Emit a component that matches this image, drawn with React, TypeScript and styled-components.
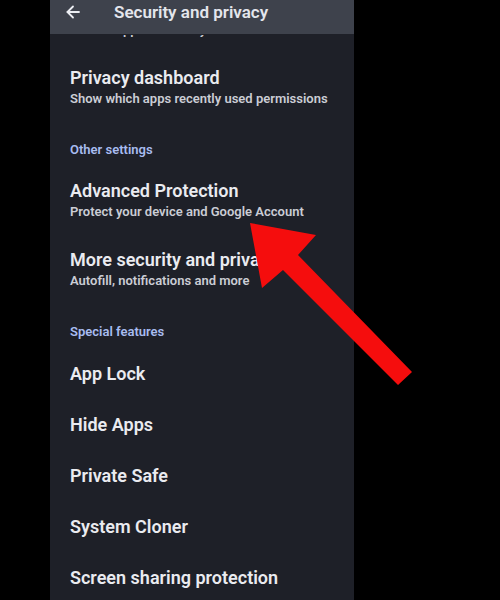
import React from "react";
import styled, { createGlobalStyle } from "styled-components";

const Global = createGlobalStyle`
  html, body { margin: 0; padding: 0; background: #000; }
  body { font-family: Roboto, "Noto Sans", "Liberation Sans", sans-serif; }
  *, *::before, *::after { box-sizing: border-box; }
`;

const Stage = styled.div`
  position: relative;
  width: 500px;
  height: 600px;
  background: #000;
  overflow: hidden;
  display: flex;
`;

const Phone = styled.div`
  margin-left: 50px;
  width: 304px;
  height: 600px;
  background: #1e2028;
  display: flex;
  flex-direction: column;
  overflow: hidden;
`;

const Header = styled.div`
  flex: none;
  height: 34px;
  background: #3e424c;
  display: flex;
  align-items: flex-start;
  padding-left: 16px;
  gap: 20px;
`;

const BackBtn = styled.div`
  width: 14px;
  height: 23px;
  display: flex;
  align-items: center;
  color: #eceef3;
`;

const HeaderTitle = styled.div`
  font-size: 17px;
  line-height: 24px;
  font-weight: 600;
  color: #e4e6ec;
  margin-left: 14px;
`;

const Viewport = styled.div`
  flex: 1;
  overflow: hidden;
  display: flex;
  flex-direction: column;
  padding-top: 1px;
`;

const Peek = styled.div`
  flex: none;
  height: 18px;
  padding: 0 20px 13px;
  overflow: hidden;
  display: flex;
  align-items: flex-end;
`;

const Item = styled.div<{ $two?: boolean }>`
  flex: none;
  padding: ${(p) => (p.$two ? "14px 20px 13px" : "14px 20px 15px")};
  display: flex;
  flex-direction: column;
`;

const Title = styled.div`
  font-size: 18px;
  line-height: 22px;
  font-weight: 600;
  color: #eaebf0;
  white-space: nowrap;
`;

const Sub = styled.div`
  flex: none;
  font-size: 13px;
  line-height: 20px;
  font-weight: 600;
  color: #cbcdd5;
  white-space: nowrap;
`;

const Section = styled.div<{ $extra?: boolean }>`
  flex: none;
  padding: 19px 20px ${(p) => (p.$extra ? "8px" : "7px")};
  font-size: 13px;
  line-height: 18px;
  font-weight: 600;
  color: #a8bcf0;
`;

const Overlay = styled.svg`
  position: absolute;
  left: 0;
  top: 0;
  pointer-events: none;
`;

type Row =
  | { kind: "section"; text: string; extra?: boolean }
  | { kind: "item"; title: string; sub?: string };

const rows: Row[] = [
  { kind: "item", title: "Privacy dashboard", sub: "Show which apps recently used permissions" },
  { kind: "section", text: "Other settings" },
  { kind: "item", title: "Advanced Protection", sub: "Protect your device and Google Account" },
  { kind: "item", title: "More security and privacy", sub: "Autofill, notifications and more" },
  { kind: "section", text: "Special features", extra: true },
  { kind: "item", title: "App Lock" },
  { kind: "item", title: "Hide Apps" },
  { kind: "item", title: "Private Safe" },
  { kind: "item", title: "System Cloner" },
  { kind: "item", title: "Screen sharing protection" },
];

export default function App() {
  return (
    <Stage>
      <Global />
      <Phone>
        <Header>
          <BackBtn>
            <svg width="14" height="14" viewBox="0 0 14 14" fill="none" stroke="currentColor" strokeWidth="1.8" strokeLinecap="round" strokeLinejoin="round">
              <path d="M13 7H1.5" />
              <path d="M7 1.5L1.5 7L7 12.5" />
            </svg>
          </BackBtn>
          <HeaderTitle>Security and privacy</HeaderTitle>
        </Header>
        <Viewport>
          <Peek>
            <Sub>Control app access to your data</Sub>
          </Peek>
          {rows.map((r, i) =>
            r.kind === "section" ? (
              <Section key={i} $extra={r.extra}>{r.text}</Section>
            ) : (
              <Item key={i} $two={!!r.sub}>
                <Title>{r.title}</Title>
                {r.sub && <Sub>{r.sub}</Sub>}
              </Item>
            )
          )}
        </Viewport>
      </Phone>
      <Overlay width="500" height="600" viewBox="0 0 500 600">
        <polygon
          points="250,223 316,235 298,255 412,372 398,385 283,270 262,288"
          fill="#f50d0d"
        />
      </Overlay>
    </Stage>
  );
}
